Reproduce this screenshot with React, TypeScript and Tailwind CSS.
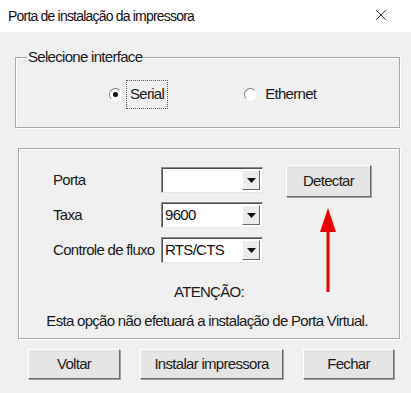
import { X } from "lucide-react";

function WinButton({ label, className = "" }: { label: string; className?: string }) {
  return (
    <div
      className={`flex items-center justify-center border border-t-[#ffffff] border-l-[#ffffff] border-r-[#6b6b6b] border-b-[#6b6b6b] bg-[#e5e5e5] shadow-[1px_1px_0_#a0a0a0] ${className}`}
    >
      <span className="text-[#1a1a1a]">{label}</span>
    </div>
  );
}

function Combo({ value }: { value: string }) {
  return (
    <div className="flex h-[26px] w-[102px] items-stretch border border-t-[#8a8a8a] border-l-[#8a8a8a] border-r-[#e8e8e8] border-b-[#e8e8e8] bg-white shadow-[inset_1px_1px_0_#505050]">
      <div className="flex flex-1 items-center pl-[3px] text-[#111]">{value}</div>
      <div className="m-[2px] flex w-[18px] items-center justify-center border border-t-[#fff] border-l-[#fff] border-r-[#6b6b6b] border-b-[#6b6b6b] bg-[#ececec]">
        <svg width="9" height="5" viewBox="0 0 9 5">
          <path d="M0 0h9L4.5 5z" fill="#111" />
        </svg>
      </div>
    </div>
  );
}

function Radio({ label, checked, focused }: { label: string; checked?: boolean; focused?: boolean }) {
  return (
    <div className="flex items-center gap-[7px]">
      <div className="flex h-[13px] w-[13px] items-center justify-center rounded-full border border-t-[#808080] border-l-[#808080] border-r-[#f8f8f8] border-b-[#f8f8f8] bg-white">
        {checked && <div className="h-[5px] w-[5px] rounded-full bg-[#111]" />}
      </div>
      <span
        className={`px-[1px] text-[#1a1a1a] ${focused ? "outline outline-1 outline-dotted outline-[#555] outline-offset-[2px]" : ""}`}
      >
        {label}
      </span>
    </div>
  );
}

export default function App() {
  return (
    <div className="relative h-[393px] w-[411px] overflow-hidden bg-[#f0f0f0] font-['Liberation_Sans',Arial,sans-serif] text-[15px] tracking-[-0.7px] text-[#1a1a1a]">
      {/* title bar */}
      <div className="flex h-[32px] items-center justify-between bg-white pl-[8px] pr-[21px]">
        <span className="text-[14px] tracking-[-0.8px] text-[#111]">
          Porta de instalação da impressora
        </span>
        <X size={18} strokeWidth={1.3} className="-mt-[2px] text-[#222]" />
      </div>

      {/* interface group */}
      <fieldset className="ml-[15px] mt-[16px] h-[80px] w-[385px] border border-[#a8a8a8] px-[10px] shadow-[inset_1px_1px_0_#fff,1px_1px_0_#fff]">
        <legend className="ml-[1px] px-[1px] leading-[18px]">Selecione interface</legend>
        <div className="mt-[17px] flex gap-[79px] pl-[83px]">
          <Radio label="Serial" checked focused />
          <Radio label="Ethernet" />
        </div>
      </fieldset>

      {/* serial group */}
      <div className="ml-[18px] mt-[20px] h-[191px] w-[382px] border border-[#a8a8a8] shadow-[inset_1px_1px_0_#fff,1px_1px_0_#fff]">
        <div className="ml-[34px] mt-[18px] flex gap-[23px]">
          <div className="flex flex-col gap-[9px]">
            <div className="flex items-center">
              <span className="w-[108px]">Porta</span>
              <Combo value="" />
            </div>
            <div className="flex items-center">
              <span className="w-[108px]">Taxa</span>
              <Combo value="9600" />
            </div>
            <div className="flex items-center">
              <span className="w-[108px]">Controle de fluxo</span>
              <Combo value="RTS/CTS" />
            </div>
          </div>
          <WinButton label="Detectar" className="-mt-[2px] h-[32px] w-[85px]" />
        </div>
        <div className="mt-[20px] text-center leading-[18px]">ATENÇÃO:</div>
        <div className="mt-[11px] pr-[4px] text-center leading-[18px]">
          Esta opção não efetuará a instalação de Porta Virtual.
        </div>
      </div>

      {/* bottom buttons */}
      <div className="ml-[28px] mt-[10px] flex gap-[20px]">
        <WinButton label="Voltar" className="h-[30px] w-[92px]" />
        <WinButton label="Instalar impressora" className="h-[30px] w-[143px]" />
        <WinButton label="Fechar" className="h-[30px] w-[91px]" />
      </div>

      {/* red annotation arrow */}
      <svg className="absolute left-[318px] top-[208px]" width="20" height="86" viewBox="0 0 20 86">
        <path d="M10 0L2 24h16z" fill="#ee0000" />
        <rect x="8.5" y="22" width="3" height="62" fill="#ee0000" />
      </svg>
    </div>
  );
}
